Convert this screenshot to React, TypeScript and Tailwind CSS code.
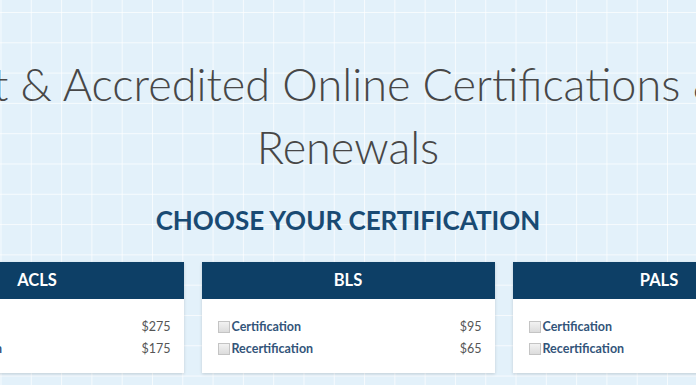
import React from "react";

type Row = { label: string; price: string };
type Card = { title: string; rows: Row[] };

const cards: Card[] = [
  { title: "ACLS", rows: [ { label: "Certification", price: "$275" }, { label: "Recertification", price: "$175" } ] },
  { title: "BLS", rows: [ { label: "Certification", price: "$95" }, { label: "Recertification", price: "$65" } ] },
  { title: "PALS", rows: [ { label: "Certification", price: "$275" }, { label: "Recertification", price: "$175" } ] },
];

export default function App() {
  return (
    <div
      className="h-[385px] w-full overflow-hidden bg-[#e3f1fa] bg-[linear-gradient(to_right,rgba(255,255,255,0.7)_1px,transparent_1px),linear-gradient(to_bottom,rgba(255,255,255,0.7)_1px,transparent_1px)] bg-[size:30.3px_30.3px] bg-[position:0.5px_12px]"
      style={{ fontFamily: "Lato, 'Open Sans', sans-serif" }}
    >
      <div className="flex flex-col items-center">
        <h1 className="mt-[53px] w-[1000px] shrink-0 text-center text-[45px] leading-[63px] font-light text-[#474747]">
          <span className="block whitespace-nowrap pr-[42px]">Fast &amp; Accredited Online Certifications &amp;</span>
          <span className="block">Renewals</span>
        </h1>
        <h2 className="mt-[26px] text-[26px] leading-[30px] font-bold text-[#194a73]">
          CHOOSE YOUR CERTIFICATION
        </h2>
        <div className="mt-[27px] flex w-[915px] shrink-0 gap-[18px]">
          {cards.map((c) => (
            <div key={c.title} className="w-[293px] shrink-0 bg-white shadow-[0_1px_3px_rgba(0,0,0,0.15)]">
              <div className="flex h-[37px] items-center justify-center bg-[#0d3f66] text-[16.5px] font-bold text-white">
                {c.title}
              </div>
              <div className="h-[74px] pt-[17px] pr-[13px] pl-[16px]">
                {c.rows.map((r) => (
                  <div key={r.label} className="flex h-[22px] items-center justify-between text-[12.5px]">
                    <div className="flex items-center">
                      <span className="mr-[2px] inline-block h-[12px] w-[12px] border border-[#c4c4c4] bg-[linear-gradient(to_bottom,#f2f2f2,#dcdcdc)]" />
                      <span className="font-bold text-[#33557a]">{r.label}</span>
                    </div>
                    <span className="text-[#555]">{r.price}</span>
                  </div>
                ))}
              </div>
            </div>
          ))}
        </div>
      </div>
    </div>
  );
}
